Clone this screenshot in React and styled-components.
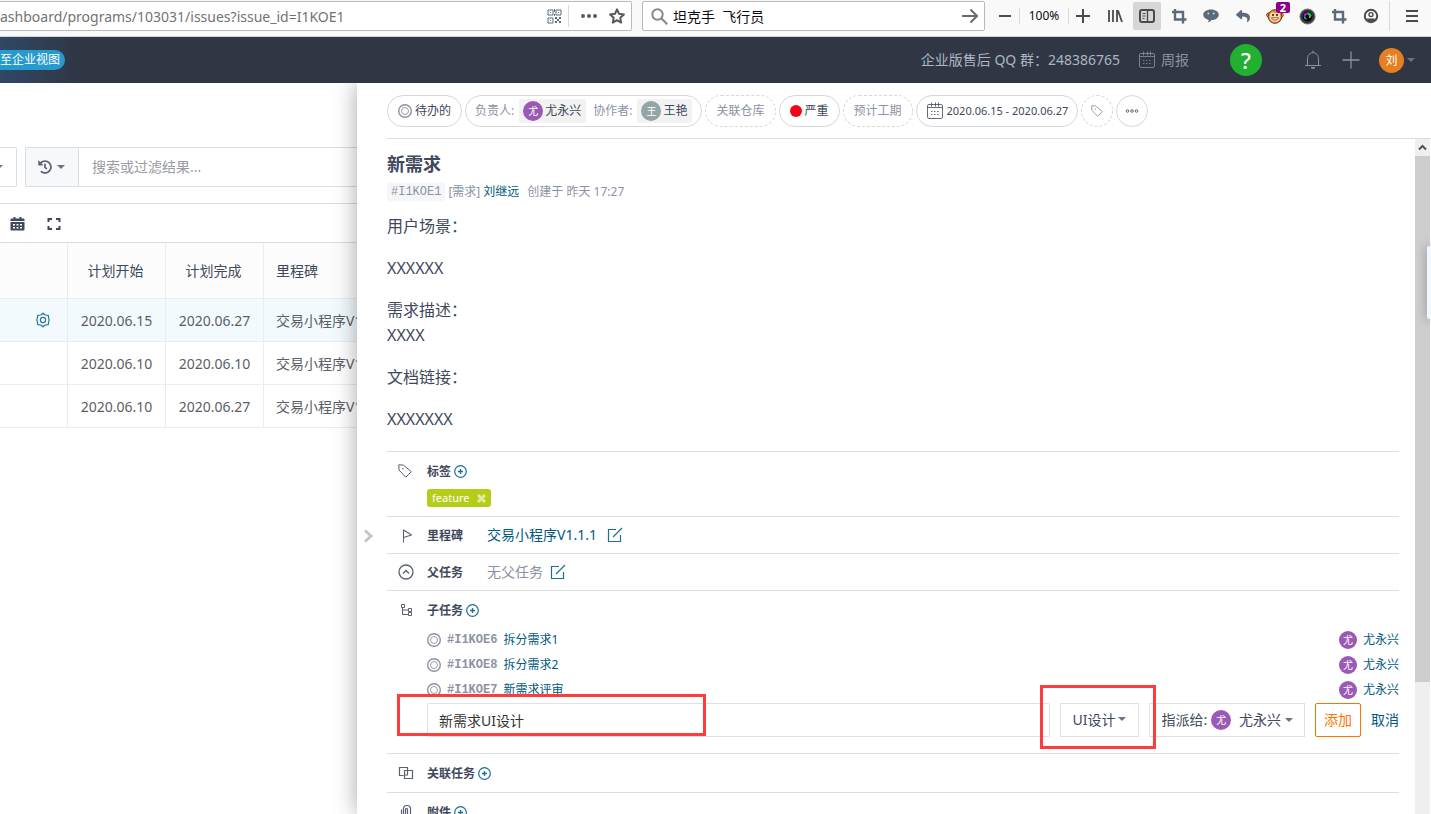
import React, { useState } from "react";
import styled, { createGlobalStyle } from "styled-components";
import { FaHistory, FaReply } from "react-icons/fa";

const GlobalStyle = createGlobalStyle`
  * {
    box-sizing: border-box;
  }
  body {
    margin: 0;
    color: #40485b;
    background-color: white;
    font-family: "Noto Sans", "Noto Sans CJK SC", sans-serif;
    font-size: 14px;
    line-height: 20px;
  }
  button, input, select {
    font: inherit;
    color: inherit;
    margin: 0;
    padding: 0;
    border: none;
    background: none;
    outline: none;
  }
  button {
    cursor: pointer;
  }
  a {
    color: #005980;
    text-decoration: none;
  }
  svg {
    display: block;
    flex: none;
  }
`;

const Page = styled.div`
  height: 100vh;
  display: flex;
  flex-direction: column;
  overflow: hidden;
`;

/* browser bar */

const BrowserBar = styled.div`
  flex: none;
  height: 37px;
  display: flex;
  align-items: flex-start;
  padding-top: 1px;
  padding-right: 2px;
  background-color: #f9f9fa;
  border-bottom: 1px solid #d4d4d6;
`;

const UrlBox = styled.div`
  flex: 1;
  min-width: 0;
  height: 30px;
  display: flex;
  align-items: center;
  margin-right: 10px;
  background-color: white;
  color: #5a5a5c;
  border: 1px solid #b9b9bb;
  border-left: none;
  border-radius: 0 2px 2px 0;
`;

const UrlInput = styled.input`
  flex: 1;
  min-width: 0;
  height: 28px;
  color: #737373;
`;

const UrlActions = styled.div`
  display: flex;
  align-items: center;
  padding-left: 6px;
`;

const BarLine = styled.span`
  width: 1px;
  height: ${(props) => props.$height || 20}px;
  background-color: #d9d9db;
`;

const UrlButton = styled.button`
  width: 28px;
  height: 28px;
  display: flex;
  align-items: center;
  justify-content: center;
  color: #5f6b78;
`;

const SearchBox = styled.div`
  width: 343px;
  height: 30px;
  display: flex;
  align-items: center;
  margin-right: 6px;
  padding-left: 8px;
  background-color: white;
  border: 1px solid #b9b9bb;
  border-radius: 2px;
`;

const SearchInput = styled.input`
  flex: 1;
  min-width: 0;
  height: 28px;
  padding-left: 5px;
  font-size: 14px;
  color: #0c0c0d;
`;

const Tools = styled.div`
  display: flex;
  align-items: center;
  gap: 4px;
  height: 30px;
`;

const ZoomGroup = styled.div`
  display: flex;
  align-items: center;
`;

const ZoomLabel = styled.button`
  width: 48px;
  font-size: 12px;
  color: #0c0c0d;
  text-align: center;
`;

const ToolButton = styled.button`
  position: relative;
  width: ${(props) => (props.$wide ? 35 : 28)}px;
  height: 28px;
  display: flex;
  align-items: center;
  justify-content: center;
  border-radius: 2px;
  color: ${(props) => (props.$addon ? "#5b6b7b" : "#4a4a4f")};
  background-color: ${(props) => (props.$active ? "#d6d6d7" : "transparent")};
`;

const CountBadge = styled.span`
  position: absolute;
  top: 0;
  right: -1px;
  width: 14px;
  height: 11px;
  border-radius: 2px;
  background-color: #8b008b;
  color: white;
  font-size: 11px;
  font-weight: 700;
  line-height: 11px;
`;

/* site header */

const Header = styled.header`
  position: relative;
  z-index: 2;
  flex: none;
  height: 46px;
  display: flex;
  align-items: center;
  justify-content: space-between;
  padding-right: 16px;
  color: #8c92a4;
  background: linear-gradient(90deg, #2f4866 0, #303643 82px);
`;

const BackLink = styled.a`
  padding-right: 5px;
  color: white;
  font-size: 12px;
  background-color: #2699cd;
  border-radius: 0 10px 10px 0;
`;

const HeaderMenu = styled.nav`
  display: flex;
  align-items: center;
`;

const QQText = styled.span`
  margin-right: 18px;
  color: #a9b7c4;
`;

const HeaderLink = styled.a`
  display: flex;
  align-items: center;
  gap: 5px;
  color: #8c92a4;
`;

const HelpButton = styled.button`
  width: 32px;
  height: 32px;
  margin: 0 42px 0 41px;
  border-radius: 50%;
  background-color: #22b030;
  color: white;
  font-size: 22px;
  font-weight: 500;
  line-height: 30px;
`;

const HeaderButton = styled.button`
  display: flex;
  align-items: center;
  gap: 3px;
  margin-right: ${(props) => props.$after || 0}px;
`;

const Avatar = styled.span`
  flex: none;
  width: ${(props) => props.$size}px;
  height: ${(props) => props.$size}px;
  border-radius: 50%;
  background-color: ${(props) => props.$color};
  color: white;
  font-size: ${(props) => (props.$size > 20 ? 12 : 10)}px;
  line-height: ${(props) => props.$size}px;
  text-align: center;
`;

const Caret = styled.span`
  width: 0;
  height: 0;
  border: 4px solid transparent;
  border-bottom: none;
  border-top-color: #6b7283;
`;

/* issue list */

const Main = styled.main`
  flex: 1;
  min-height: 0;
  display: flex;
`;

const ListPane = styled.div`
  flex: 0 0 357px;
  overflow: hidden;
  padding-top: 64px;
`;

const FilterRow = styled.div`
  height: 57px;
  display: flex;
  align-items: flex-start;
  gap: 8px;
  border-bottom: 1px solid #d9dbde;
`;

/* the rest of this button runs off the left side */
const FilterStub = styled.button`
  width: 29px;
  height: 40px;
  display: flex;
  align-items: center;
  margin-left: -12px;
  padding-left: 7px;
  border: 1px solid #d9dfe6;
  border-left: none;
  border-radius: 0 2px 2px 0;
`;

const FilterBox = styled.div`
  flex: 1;
  height: 40px;
  display: flex;
  border: 1px solid #d9dfe6;
  border-right: none;
  border-radius: 2px 0 0 2px;
`;

const HistoryButton = styled.button`
  width: 53px;
  display: flex;
  align-items: center;
  justify-content: center;
  gap: 5px;
  padding-right: 2px;
  color: #5f6472;
  background-color: #f6f8fa;
  border-right: 1px solid #d9dfe6;
`;

const FilterInput = styled.input`
  flex: 1;
  min-width: 0;
  padding-left: 13px;
  &::placeholder {
    color: #9a9ca3;
  }
`;

const ViewRow = styled.div`
  height: 39px;
  display: flex;
  align-items: center;
  gap: 22px;
  padding-left: 10px;
  border-bottom: 1px solid #d9dbde;
`;

const ViewButton = styled.button`
  display: flex;
  padding-top: 2px;
  color: #40485b;
`;

const IssueTable = styled.table`
  width: 424px;
  table-layout: fixed;
  border-collapse: separate;
  border-spacing: 0;
  white-space: nowrap;
`;

const HeadCell = styled.th`
  width: ${(props) => props.$width}px;
  height: 56px;
  padding: ${(props) => (props.$left ? "0 12px" : "0 2px 0 0")};
  text-align: ${(props) => (props.$left ? "left" : "center")};
  font-weight: 400;
  background-color: #fcfcfc;
  border-right: 1px solid #ececee;
  border-bottom: 1px solid #ececee;
`;

const Cell = styled.td`
  height: 43px;
  padding: ${(props) => (props.$left ? "2px 12px 0" : "2px 0 0")};
  text-align: ${(props) => (props.$left ? "left" : "center")};
  color: #5c5e66;
  background-color: ${(props) => (props.$active ? "#f3fafe" : "white")};
  border-right: 1px solid #ececee;
  border-bottom: 1px solid #ececee;
`;

const GearButton = styled.button`
  display: flex;
  margin-left: 35px;
  padding-bottom: 2px;
  color: #2d7596;
`;

/* drawer */

const Drawer = styled.section`
  position: relative;
  z-index: 1;
  flex: 1;
  min-width: 0;
  display: flex;
  flex-direction: column;
  background-color: white;
  box-shadow: 0 0 22px rgba(0, 0, 0, 0.35);
`;

const PillBar = styled.div`
  flex: none;
  height: 56px;
  display: flex;
  align-items: center;
  gap: 3px;
  margin-left: 30px;
  border-bottom: 1px solid #dcddde;
`;

const Pill = styled.button`
  height: 32px;
  min-width: 32px;
  display: flex;
  align-items: center;
  justify-content: center;
  gap: ${(props) => props.$gap || 3}px;
  padding: 0 ${(props) => (props.$round ? 0 : props.$pad || 10)}px;
  border: 1px ${(props) => (props.$empty ? "dashed" : "solid")} #d6d7d9;
  border-radius: 16px;
  font-size: ${(props) => (props.$small ? 11 : 12)}px;
  white-space: nowrap;
  color: ${(props) => (props.$empty ? "#8c92a4" : "#40485b")};
`;

const PillLabel = styled.span`
  color: #8c92a4;
`;

const Person = styled.span`
  height: 24px;
  display: flex;
  align-items: center;
  gap: 2px;
  margin-right: ${(props) => props.$after || 0}px;
  padding: 0 5px 0 4px;
  border-radius: 2px;
  background-color: #f2f2f2;
`;

const RedDot = styled.span`
  width: 12px;
  height: 12px;
  border-radius: 50%;
  background-color: #f20519;
`;

const DrawerBody = styled.div`
  flex: 1;
  min-height: 0;
  display: flex;
`;

const Gutter = styled.div`
  flex: 0 0 30px;
  padding: 390px 0 0 6px;
`;

const CollapseButton = styled.button`
  display: flex;
  color: #c3c6d0;
`;

const Content = styled.div`
  flex: 1;
  min-width: 0;
  overflow: hidden;
  padding: 12px 16px 0 0;
`;

const Scrollbar = styled.div`
  flex: 0 0 16px;
  display: flex;
  flex-direction: column;
  background-color: #efefef;
  border-right: 1px solid white;
`;

const ScrollArrow = styled.div`
  flex: none;
  height: 17px;
  display: flex;
  align-items: center;
  justify-content: center;
  color: #505050;
`;

const ScrollTrack = styled.div`
  flex: 1;
`;

const ScrollThumb = styled.div`
  height: 80%;
  background-color: #cdcdcd;
`;

const SideTab = styled.button`
  position: absolute;
  right: 0;
  top: 163px;
  width: 4px;
  height: 73px;
  background-color: #f0f8ff;
  border-radius: 2px 0 0 2px;
  box-shadow: 0 0 10px rgba(0, 0, 0, 0.4);
`;

const Title = styled.h1`
  margin: 0;
  font-size: 18px;
  line-height: 26px;
  font-weight: 700;
`;

const Meta = styled.div`
  height: 18px;
  display: flex;
  align-items: center;
  gap: 3px;
  margin-top: 6px;
  font-size: 12px;
  line-height: 18px;
  color: #8c92a4;
`;

const IssueCode = styled.code`
  padding: 0 4px;
  border-radius: 2px;
  background-color: #f5f6f8;
  font-family: "Liberation Mono", monospace;
  font-size: 12px;
`;

const Created = styled.span`
  margin-left: 5px;
`;

const Description = styled.div`
  margin: 13px 0 19px;
  font-size: 16px;
  line-height: 25px;
`;

const Paragraph = styled.p`
  margin: 0 0 17px;
  &:last-child {
    margin-bottom: 0;
  }
`;

const Section = styled.section`
  display: flex;
  padding: ${(props) => (props.$roomy ? 9 : 8)}px 0;
  border-top: 1px solid #dcddde;
`;

const SectionIcon = styled.div`
  flex: 0 0 40px;
  height: 20px;
  display: flex;
  align-items: center;
  padding-left: 11px;
  color: #5a6172;
`;

const SectionMain = styled.div`
  flex: 1;
  min-width: 0;
`;

const SectionHead = styled.div`
  display: flex;
  align-items: center;
  height: 20px;
  gap: 3px;
`;

const SectionTitle = styled.h2`
  margin: 0;
  min-width: ${(props) => (props.$wide ? 57 : 0)}px;
  padding-top: 2px;
  font-size: 12px;
  line-height: 20px;
  font-weight: 700;
`;

const AddCircle = styled.button`
  display: flex;
  color: #1b7091;
`;

const Value = styled.span`
  color: #8c92a4;
`;

const EditButton = styled.button`
  display: flex;
  margin-left: ${(props) => props.$before || 4}px;
  color: #1b7091;
`;

const TagChip = styled.span`
  display: flex;
  align-items: center;
  justify-content: space-between;
  width: 64px;
  height: 18px;
  margin-top: 8px;
  padding: 0 5px;
  border-radius: 3px;
  background-color: #b5cc18;
  color: white;
  font-size: 11px;
`;

const TagRemove = styled.button`
  display: flex;
  opacity: 0.6;
`;

const SubTasks = styled.ul`
  list-style: none;
  margin: 7px 0 1px;
  padding: 0;
`;

const SubTask = styled.li`
  height: 25px;
  display: flex;
  align-items: center;
  gap: 6px;
  font-size: 12px;
  color: #8c92a4;
`;

const SubCode = styled.code`
  font-family: "Liberation Mono", monospace;
  font-size: 12px;
  font-weight: 700;
`;

const Owner = styled.a`
  display: flex;
  align-items: center;
  gap: 6px;
  margin-left: auto;
`;

const AddForm = styled.form`
  display: flex;
  align-items: center;
  gap: 10px;
  height: 34px;
  margin-bottom: 7px;
`;

const NameField = styled.div`
  position: relative;
  flex: 1;
  min-width: 0;
`;

const NameInput = styled.input`
  display: block;
  width: 100%;
  height: 34px;
  padding: 0 11px;
  color: #333333;
  border: 1px solid #dce1e6;
  border-radius: 2px;
`;

const TypeField = styled.div`
  position: relative;
  width: 79px;
  ${Caret} {
    position: absolute;
    right: 13px;
    top: 14px;
    pointer-events: none;
  }
`;

const TypeSelect = styled.select`
  display: block;
  appearance: none;
  width: 100%;
  height: 34px;
  padding: 0 12px;
  border: 1px solid #dce1e6;
`;

const AssignButton = styled.button`
  height: 34px;
  display: flex;
  align-items: center;
  gap: 4px;
  padding: 0 11px 0 12px;
  border: 1px solid #dce1e6;
  white-space: nowrap;
`;

const AddButton = styled.button`
  width: 46px;
  height: 34px;
  color: #fe7300;
  border: 1px solid #fe7300;
  border-radius: 2px;
`;

/* red frames drawn over the form */
const Mark = styled.span`
  position: absolute;
  border: 3px solid #ff3b3b;
  pointer-events: none;
`;

const NameMark = styled(Mark)`
  left: -30px;
  top: -9px;
  width: 309px;
  height: 42px;
`;

const TypeMark = styled(Mark)`
  left: -20px;
  right: -17px;
  top: -18px;
  bottom: -12px;
`;

/* icons */

function Icon({ w = 16, h = w, stroke = 1, children }) {
  return (
    <svg
      width={w}
      height={h}
      viewBox={`0 0 ${w} ${h}`}
      fill="none"
      stroke="currentColor"
      strokeWidth={stroke}
      aria-hidden="true"
    >
      {children}
    </svg>
  );
}

const TargetIcon = () => (
  <Icon w={14}>
    <circle cx="7" cy="7" r="6.3" stroke="#8c92a4" strokeWidth="1.4" />
    <circle cx="7" cy="7" r="3.5" stroke="#8c92a4" strokeWidth="0.9" />
  </Icon>
);

const CalendarIcon = () => (
  <Icon w={18}>
    <g strokeOpacity="0.8">
      <rect x="1.5" y="2.5" width="15" height="14" rx="1.5" />
      <path d="M1.5 5.5h15M5.5 0.5v4M9.5 0.5v4M12.5 0.5v4" />
      <path d="M5 9.5h8M5 12.5h8" strokeDasharray="1.5 1.5" />
    </g>
  </Icon>
);

const TagIcon = ({ size = 14 }) => (
  <svg width={size} height={size} viewBox="0 0 14 14" fill="none" stroke="currentColor">
    <path d="M0.8 0.8L5.4 1.1 13.3 7.6 7.8 13.2 1 6z" strokeLinejoin="round" />
    <circle cx="5" cy="4.8" r="0.8" fill="currentColor" stroke="none" />
  </svg>
);

const PlusCircle = () => (
  <Icon w={13}>
    <circle cx="6.5" cy="6.5" r="5.8" strokeWidth="1.2" />
    <path d="M6.5 4v5M4 6.5h5" strokeWidth="1.3" />
  </Icon>
);

const EditIcon = () => (
  <Icon w={16}>
    <path d="M9 2.5H1.5v12h12V8M15 1L6 10" strokeWidth="1.2" />
  </Icon>
);

const CropIcon = () => (
  <Icon w={16} stroke={2.4}>
    <path d="M1 4h11v11.5M4 1v10.5h11.5" />
  </Icon>
);

const QrIcon = () => (
  <Icon w={15} stroke={1}>
    <path d="M1 1h5v5H1zM9 1h5v5H9zM1 9h5v5H1z" />
    <path
      d="M3 3h1v1H3zM11 3h1v1h-1zM3 11h1v1H3zM8 8h2v2H8zM12 8h2v2h-2zM10 10h2v2h-2zM8 12h2v2H8zM12 12h2v2h-2zM7 0h1v3H7zM7 5h1v2H7z"
      fill="currentColor"
      stroke="none"
    />
  </Icon>
);

const MonkeyIcon = () => (
  <Icon w={18}>
    <circle cx="3" cy="8" r="2.3" fill="#f3b27a" stroke="#8a3b12" />
    <circle cx="15" cy="8" r="2.3" fill="#f3b27a" stroke="#8a3b12" />
    <circle cx="9" cy="9.5" r="6.8" fill="#e8863a" stroke="#7a3210" />
    <path
      d="M4 8C4 4.5 8 5 9 6.5 10 5 14 4.5 14 8c1.500 3-1 7-5 7s-6.500-4-5-7z"
      fill="#fbd7a8"
      stroke="none"
    />
    <circle cx="7" cy="8" r="1" fill="#2b1608" stroke="none" />
    <circle cx="11" cy="8" r="1" fill="#2b1608" stroke="none" />
    <path
      d="M5.5 10.8h7c-.4 3-6.6 3-7 0z"
      fill="white"
      stroke="#7a3210"
      strokeWidth="0.8"
    />
  </Icon>
);

const LensIcon = () => (
  <Icon w={17}>
    <circle cx="8.5" cy="8.5" r="7.6" fill="#3a3a3c" stroke="#77777a" strokeWidth="0.8" />
    <circle cx="8.5" cy="8.5" r="5" fill="#050505" stroke="none" />
    <path d="M5.5 8.5a3 3 0 0 1 3-3" stroke="#b51bd0" strokeWidth="2" />
    <path d="M8.5 5.5a3 3 0 0 1 3 3" stroke="#16c95c" strokeWidth="2.4" />
    <path d="M5.5 8.5a3 3 0 0 0 2 2.6" stroke="#18a5e8" strokeWidth="1.6" />
    <path d="M11.5 8.5l-1.5 1" stroke="#e8d01c" strokeWidth="1.4" />
  </Icon>
);

const issues = [
  { start: "2020.06.15", end: "2020.06.27", active: true },
  { start: "2020.06.10", end: "2020.06.10" },
  { start: "2020.06.10", end: "2020.06.27" },
];

const subTasks = [
  { code: "#I1KOE6", name: "拆分需求1" },
  { code: "#I1KOE8", name: "拆分需求2" },
  { code: "#I1KOE7", name: "新需求评审" },
];

function Browser() {
  return (
    <BrowserBar>
      <UrlBox>
        <UrlInput
          aria-label="地址"
          defaultValue="ashboard/programs/103031/issues?issue_id=I1KOE1"
        />
        <UrlButton aria-label="二维码">
          <QrIcon />
        </UrlButton>
        <BarLine $height={22} />
        <UrlActions>
          <UrlButton aria-label="页面操作">
            <Icon w={16}>
              <g fill="#5a5a5c" stroke="none">
                <circle cx="2" cy="8" r="2" />
                <circle cx="8" cy="8" r="2" />
                <circle cx="14" cy="8" r="2" />
              </g>
            </Icon>
          </UrlButton>
          <UrlButton aria-label="书签">
            <Icon w={16} stroke={2}>
              <path
                d="M8 1.4l2 4.4 4.9.6-3.6 3.3.9 4.9L8 12.2l-4.2 2.400.9-4.900L1.100 6.400 6 5.800z"
                stroke="#5a5a5c"
                strokeLinejoin="round"
              />
            </Icon>
          </UrlButton>
        </UrlActions>
      </UrlBox>
      <SearchBox>
        <Icon w={17} stroke={2}>
          <g stroke="#8a8a8c">
            <circle cx="6.5" cy="6.5" r="5.2" />
            <path d="M10.3 10.3l6 6" strokeWidth="2.2" />
          </g>
        </Icon>
        <SearchInput aria-label="搜索" defaultValue="坦克手  飞行员" />
        <UrlButton aria-label="转到">
          <Icon w={16} stroke={2}>
            <path d="M0 8h15M8.5 1.5L15 8l-6.5 6.5" stroke="#6a6a6c" />
          </Icon>
        </UrlButton>
      </SearchBox>
      <Tools>
        <ZoomGroup>
          <ToolButton aria-label="缩小">
            <Icon w={14} stroke={2}>
              <path d="M1 7h12" />
            </Icon>
          </ToolButton>
          <BarLine $height={16} />
          <ZoomLabel>100%</ZoomLabel>
          <BarLine $height={16} />
          <ToolButton aria-label="放大">
            <Icon w={14} stroke={2}>
              <path d="M0 7h14M7 0v14" />
            </Icon>
          </ToolButton>
        </ZoomGroup>
        <ToolButton aria-label="我的足迹">
          <Icon w={16} stroke={2}>
            <path d="M2 2v12M6 2v12M10 2v12M11 2.5l4 11.5" strokeWidth="1.8" />
          </Icon>
        </ToolButton>
        <ToolButton $active aria-label="侧栏">
          <Icon w={16} stroke={2}>
            <rect x="1" y="2" width="14" height="12" rx="2" />
            <path d="M8.5 2v12" strokeWidth="1.4" />
            <path d="M3.5 5.5h3M3.5 8h3M3.5 10.5h2" strokeWidth="1" />
          </Icon>
        </ToolButton>
        <ToolButton $addon aria-label="截图">
          <CropIcon />
        </ToolButton>
        <ToolButton $addon aria-label="消息">
          <Icon w={16}>
            <path
              d="M8 1.5c4.4 0 7.8 2.3 7.8 5.3s-3.4 5.3-7.3 5.3c-.6 1-2 2-3.5 2.4.5-.8.7-1.6.6-2.6C2.4 11.2.2 9.3.2 6.8.2 3.8 3.6 1.5 8 1.5z"
              fill="currentColor"
              stroke="none"
            />
            <circle cx="5.3" cy="5.5" r="0.9" fill="#d7dce1" stroke="none" />
            <circle cx="10.7" cy="5.5" r="0.9" fill="#d7dce1" stroke="none" />
          </Icon>
        </ToolButton>
        <ToolButton $addon aria-label="撤销">
          <FaReply size={14} />
        </ToolButton>
        <ToolButton aria-label="脚本">
          <MonkeyIcon />
          <CountBadge>2</CountBadge>
        </ToolButton>
        <ToolButton aria-label="取色">
          <LensIcon />
        </ToolButton>
        <ToolButton $addon aria-label="裁剪">
          <CropIcon />
        </ToolButton>
        <ToolButton aria-label="账户">
          <Icon w={16} stroke={2}>
            <circle cx="8" cy="8" r="6.2" />
            <circle cx="8" cy="6.6" r="2" strokeWidth="1.4" />
            <path d="M3.5 10.4h9l-2 3h-5z" fill="currentColor" stroke="none" />
          </Icon>
        </ToolButton>
        <BarLine $height={30} />
        <ToolButton $wide aria-label="菜单">
          <Icon w={12} stroke={2}>
            <path d="M0 1h12M0 6h12M0 11h12" />
          </Icon>
        </ToolButton>
      </Tools>
    </BrowserBar>
  );
}

function TopHeader() {
  return (
    <Header>
      <BackLink href="#enterprise">至企业视图</BackLink>
      <HeaderMenu>
        <QQText>企业版售后 QQ 群：248386765</QQText>
        <HeaderLink href="#report">
          <CalendarIcon />
          周报
        </HeaderLink>
        <HelpButton>?</HelpButton>
        <HeaderButton $after={20} aria-label="通知">
          <Icon w={18} h={20}>
            <path d="M1 15.5h16M3.5 15.5V9c0-4 2.5-6.3 5.5-6.3S14.5 5 14.5 9v6.5M9 0.5v2" />
            <path d="M7 17.5c.5 1.2 3.5 1.2 4 0z" fill="currentColor" />
          </Icon>
        </HeaderButton>
        <HeaderButton $after={19} aria-label="新建">
          <Icon w={18} stroke={1.3}>
            <path d="M0.5 9h17M9 0.5v17" />
          </Icon>
        </HeaderButton>
        <HeaderButton aria-label="用户">
          <Avatar $size={25} $color="#e67e22">
            刘
          </Avatar>
          <Caret />
        </HeaderButton>
      </HeaderMenu>
    </Header>
  );
}

function IssueList() {
  return (
    <ListPane>
      <FilterRow>
        <FilterStub aria-label="筛选">
          <Caret />
        </FilterStub>
        <FilterBox>
          <HistoryButton aria-label="历史">
            <FaHistory size={14} />
            <Caret />
          </HistoryButton>
          <FilterInput aria-label="过滤" placeholder="搜索或过滤结果..." />
        </FilterBox>
      </FilterRow>
      <ViewRow>
        <ViewButton aria-label="日历">
          <svg width="15" height="14" viewBox="0 0 15 14" fill="currentColor">
            <path d="M3.5 0h2v1.5h4V0h2v1.5h2q1 0 1 1V4H.5V2.5q0-1 1-1h2zM.5 5h14v7.5q0 1-1 1h-12q-1 0-1-1z" />
            <path
              d="M3 7h2v1.5H3zM6.5 7h2v1.5h-2zM10 7h2v1.5h-2zM3 10h2v1.5H3zM6.5 10h2v1.5h-2zM10 10h2v1.5h-2z"
              fill="white"
            />
          </svg>
        </ViewButton>
        <ViewButton aria-label="全屏">
          <Icon w={14} stroke={2}>
            <path d="M1.5 5V2H5M9 2h3.5v3M12.5 9v3H9M5 12H1.5V9" />
          </Icon>
        </ViewButton>
      </ViewRow>
      <IssueTable>
        <thead>
          <tr>
            <HeadCell $width={68} />
            <HeadCell $width={98}>计划开始</HeadCell>
            <HeadCell $width={98}>计划完成</HeadCell>
            <HeadCell $width={160} $left>
              里程碑
            </HeadCell>
          </tr>
        </thead>
        <tbody>
          {issues.map((issue, i) => (
            <tr key={i}>
              <Cell $active={issue.active}>
                {issue.active ? (
                  <GearButton aria-label="设置">
                    <Icon w={16} stroke={1.2}>
                      <path
                        d="M5.8 3L8 1.2 10.2 3l3.1.4.3 2.7L14.2 8l-.6 1.9-.3 2.7-3.1.4L8 14.8 5.8 13l-3.1-.4-.3-2.7L1.8 8l.6-1.9.3-2.7z"
                        strokeLinejoin="round"
                      />
                      <circle cx="8" cy="8" r="2.6" />
                    </Icon>
                  </GearButton>
                ) : null}
              </Cell>
              <Cell $active={issue.active}>{issue.start}</Cell>
              <Cell $active={issue.active}>{issue.end}</Cell>
              <Cell $active={issue.active} $left>
                交易小程序V1.1.1
              </Cell>
            </tr>
          ))}
        </tbody>
      </IssueTable>
    </ListPane>
  );
}

function Pills() {
  return (
    <PillBar>
      <Pill>
        <TargetIcon />
        待办的
      </Pill>
      <Pill $gap={5} $pad={9}>
        <PillLabel>负责人:</PillLabel>
        <Person $after={2}>
          <Avatar $size={20} $color="#9b59b6">
            尤
          </Avatar>
          尤永兴
        </Person>
        <PillLabel>协作者:</PillLabel>
        <Person>
          <Avatar $size={20} $color="#95a5a6">
            王
          </Avatar>
          王艳
        </Person>
      </Pill>
      <Pill $empty>关联仓库</Pill>
      <Pill>
        <RedDot />
        严重
      </Pill>
      <Pill $empty>预计工期</Pill>
      <Pill $small $pad={9}>
        <CalendarIcon />
        2020.06.15 - 2020.06.27
      </Pill>
      <Pill $empty $round aria-label="标签">
        <TagIcon size={12} />
      </Pill>
      <Pill $round aria-label="更多">
        <Icon w={14} h={4} stroke={0.8}>
          <circle cx="2.5" cy="2" r="1.3" />
          <circle cx="7" cy="2" r="1.3" />
          <circle cx="11.5" cy="2" r="1.3" />
        </Icon>
      </Pill>
    </PillBar>
  );
}

function IssueDrawer() {
  const [name, setName] = useState("新需求UI设计");
  const [type, setType] = useState("UI设计");

  return (
    <Drawer>
      <Pills />
      <DrawerBody>
        <Gutter>
          <CollapseButton aria-label="收起">
            <Icon w={11} h={14} stroke={3}>
              <path d="M2 1.5L8 7l-6 5.5" />
            </Icon>
          </CollapseButton>
        </Gutter>
        <Content>
          <Title>新需求</Title>
          <Meta>
            <IssueCode>#I1KOE1</IssueCode>
            <span>[需求]</span>
            <a href="#user">刘继远</a>
            <Created>创建于 昨天 17:27</Created>
          </Meta>
          <Description>
            <Paragraph>用户场景：</Paragraph>
            <Paragraph>XXXXXX</Paragraph>
            <Paragraph>
              需求描述：
              <br />
              XXXX
            </Paragraph>
            <Paragraph>文档链接：</Paragraph>
            <Paragraph>XXXXXXX</Paragraph>
          </Description>

          <Section $roomy>
            <SectionIcon>
              <TagIcon />
            </SectionIcon>
            <SectionMain>
              <SectionHead>
                <SectionTitle>标签</SectionTitle>
                <AddCircle aria-label="添加标签">
                  <PlusCircle />
                </AddCircle>
              </SectionHead>
              <TagChip>
                feature
                <TagRemove aria-label="移除">
                  <Icon w={9} stroke={3}>
                    <path d="M1 1l7 7M8 1L1 8" />
                  </Icon>
                </TagRemove>
              </TagChip>
            </SectionMain>
          </Section>

          <Section>
            <SectionIcon>
              <Icon w={16} stroke={1.1}>
                <path d="M5.5 15.5V3l8 5-8 2.5" strokeLinejoin="round" />
              </Icon>
            </SectionIcon>
            <SectionMain>
              <SectionHead>
                <SectionTitle $wide>里程碑</SectionTitle>
                <a href="#milestone">交易小程序V1.1.1</a>
                <EditButton $before={7} aria-label="编辑里程碑">
                  <EditIcon />
                </EditButton>
              </SectionHead>
            </SectionMain>
          </Section>

          <Section>
            <SectionIcon>
              <Icon w={16} stroke={1.3}>
                <circle cx="8" cy="8" r="7" />
                <path d="M5 9.5l3-3 3 3" strokeWidth="1.4" />
              </Icon>
            </SectionIcon>
            <SectionMain>
              <SectionHead>
                <SectionTitle $wide>父任务</SectionTitle>
                <Value>无父任务</Value>
                <EditButton aria-label="编辑父任务">
                  <EditIcon />
                </EditButton>
              </SectionHead>
            </SectionMain>
          </Section>

          <Section $roomy>
            <SectionIcon>
              <Icon w={16}>
                <path d="M3.5 2.5h3v3h-3zM10.5 6.5h3v3h-3zM10.5 10.5h3v3h-3zM4.5 5.5v7h6M4.5 8h6" />
              </Icon>
            </SectionIcon>
            <SectionMain>
              <SectionHead>
                <SectionTitle>子任务</SectionTitle>
                <AddCircle aria-label="添加子任务">
                  <PlusCircle />
                </AddCircle>
              </SectionHead>
              <SubTasks>
                {subTasks.map((task) => (
                  <SubTask key={task.code}>
                    <TargetIcon />
                    <SubCode>{task.code}</SubCode>
                    <a href={task.code}>{task.name}</a>
                    <Owner href="#owner">
                      <Avatar $size={18} $color="#9b59b6">
                        尤
                      </Avatar>
                      尤永兴
                    </Owner>
                  </SubTask>
                ))}
              </SubTasks>
              <AddForm onSubmit={(e) => e.preventDefault()}>
                <NameField>
                  <NameInput
                    aria-label="任务标题"
                    value={name}
                    onChange={(e) => setName(e.target.value)}
                  />
                  <NameMark />
                </NameField>
                <TypeField>
                  <TypeSelect
                    aria-label="任务类型"
                    value={type}
                    onChange={(e) => setType(e.target.value)}
                  >
                    <option>UI设计</option>
                  </TypeSelect>
                  <Caret />
                  <TypeMark />
                </TypeField>
                <AssignButton type="button">
                  指派给:
                  <Avatar $size={20} $color="#9b59b6">
                    尤
                  </Avatar>
                  <span>&nbsp;尤永兴</span>
                  <Caret />
                </AssignButton>
                <AddButton type="submit">添加</AddButton>
                <a href="#cancel">取消</a>
              </AddForm>
            </SectionMain>
          </Section>

          <Section $roomy>
            <SectionIcon>
              <Icon w={16} stroke={1.2}>
                <path d="M5.5 10.5h-4v-8h8v3M9.5 5.5V10H6M8 5.5h6.5v8h-8v-8z" />
              </Icon>
            </SectionIcon>
            <SectionMain>
              <SectionHead>
                <SectionTitle>关联任务</SectionTitle>
                <AddCircle aria-label="添加关联任务">
                  <PlusCircle />
                </AddCircle>
              </SectionHead>
            </SectionMain>
          </Section>

          <Section $roomy>
            <SectionIcon>
              <Icon w={16}>
                <path
                  d="M3.5 13V5.5M12.5 13V5a3 3 0 0 0-3-3.5h-1a3 3 0 0 0-3 3.5v8M9.5 13V5.5c0-1.5-2-1.5-2 0V13"
                  strokeWidth="1.2"
                />
              </Icon>
            </SectionIcon>
            <SectionMain>
              <SectionHead>
                <SectionTitle>附件</SectionTitle>
                <AddCircle aria-label="添加附件">
                  <PlusCircle />
                </AddCircle>
              </SectionHead>
            </SectionMain>
          </Section>
        </Content>
        <Scrollbar>
          <ScrollArrow>
            <Icon w={9} h={7} stroke={2}>
              <path d="M1 5.5L4.5 2 8 5.5" />
            </Icon>
          </ScrollArrow>
          <ScrollTrack>
            <ScrollThumb />
          </ScrollTrack>
        </Scrollbar>
      </DrawerBody>
      <SideTab aria-label="侧边工具" />
    </Drawer>
  );
}

function App() {
  return (
    <Page>
      <GlobalStyle />
      <Browser />
      <TopHeader />
      <Main>
        <IssueList />
        <IssueDrawer />
      </Main>
    </Page>
  );
}

export default App;
